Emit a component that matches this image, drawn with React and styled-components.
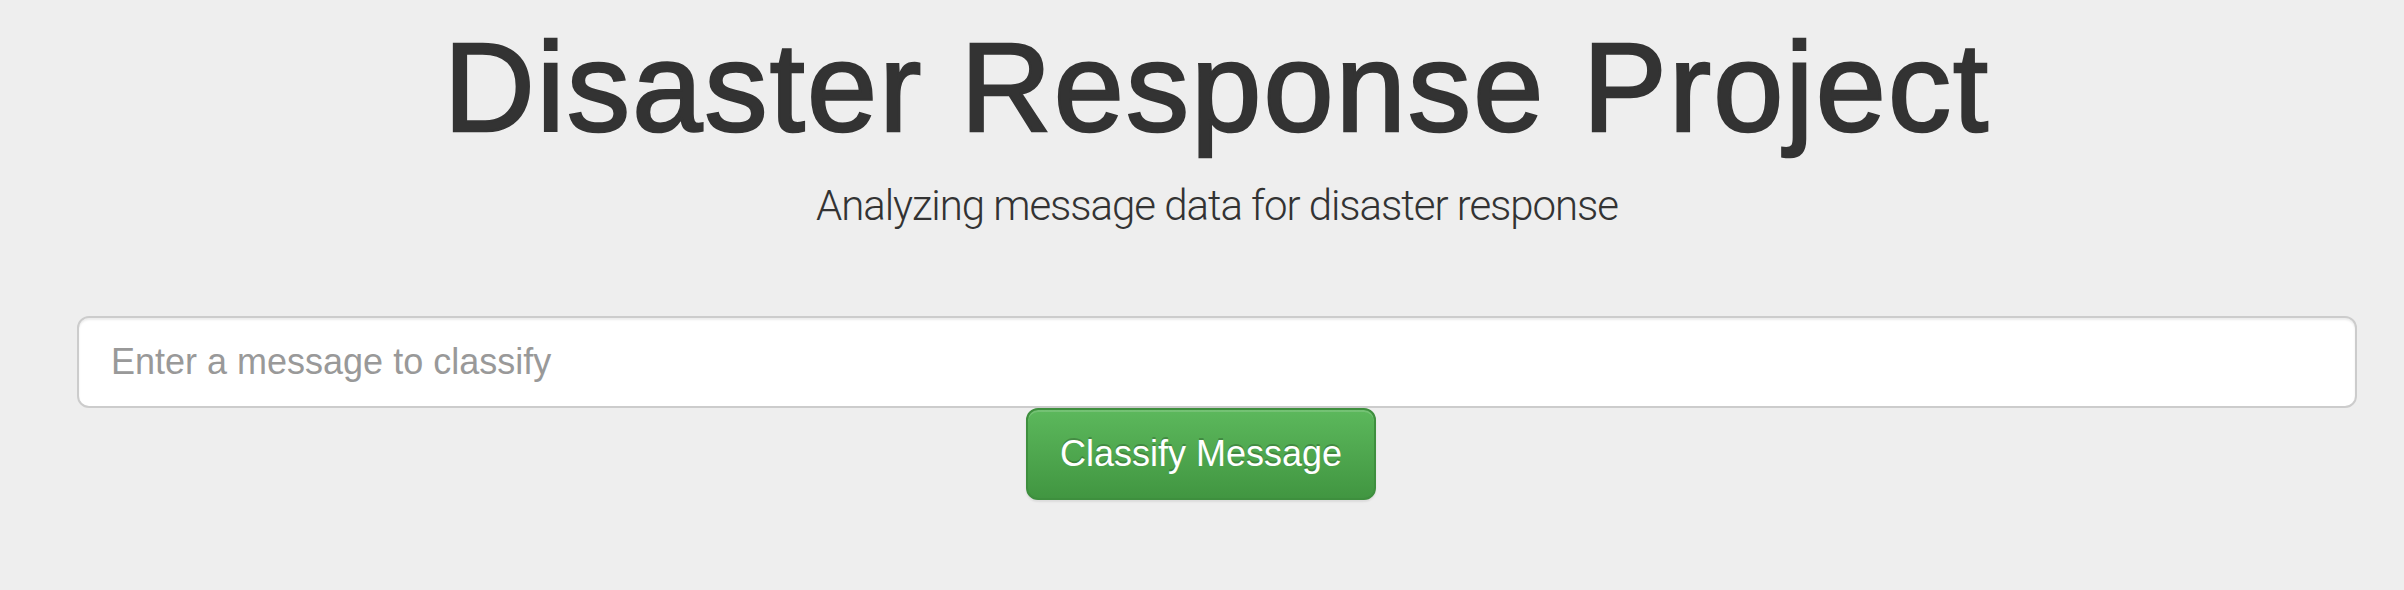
import React from 'react'
import styled, { createGlobalStyle } from 'styled-components'

const GlobalStyle = createGlobalStyle`
  html, body {
    margin: 0;
    padding: 0;
    background-color: #eeeeee;
  }
  body {
    font-family: "Liberation Sans", Arial, sans-serif;
    color: #333333;
  }
  * {
    box-sizing: border-box;
  }
`

function App() {
  return (
    <Page>
      <GlobalStyle />
      <Jumbotron>
        <Title>Disaster Response Project</Title>
        <Lead>Analyzing message data for disaster response</Lead>
        <Form onSubmit={e => e.preventDefault()}>
          <MessageInput type="text" placeholder="Enter a message to classify" />
          <ButtonRow>
            <ClassifyButton type="submit">Classify Message</ClassifyButton>
          </ButtonRow>
        </Form>
      </Jumbotron>
    </Page>
  )
}

export default App

const Page = styled.div`
  min-height: 590px;
  background-color: #eeeeee;
`

const Jumbotron = styled.div`
  width: 2340px;
  margin-left: 47px;
  padding: 19px 30px 60px;
  display: flex;
  flex-direction: column;
  align-items: stretch;
`

const Title = styled.h1`
  margin: 0;
  font-family: "Liberation Sans", Arial, sans-serif;
  font-weight: 400;
  font-size: 126px;
  line-height: 1.1;
  letter-spacing: 2.2px;
  -webkit-text-stroke: 2.5px #333333;
  text-align: center;
  color: #333333;
`

const Lead = styled.p`
  margin: 18px 0 0;
  font-family: Roboto, "Liberation Sans", sans-serif;
  font-weight: 300;
  font-size: 42px;
  line-height: 60px;
  letter-spacing: -1.05px;
  text-align: center;
  color: #333333;
`

const Form = styled.form`
  margin-top: 80px;
  display: flex;
  flex-direction: column;
`

const MessageInput = styled.input`
  width: 100%;
  height: 92px;
  padding: 20px 32px;
  font-family: "Liberation Sans", Arial, sans-serif;
  font-size: 36px;
  line-height: 48px;
  color: #555555;
  background-color: #ffffff;
  border: 2px solid #cccccc;
  border-radius: 12px;
  box-shadow: inset 0 2px 2px rgba(0, 0, 0, 0.075);
  outline: none;

  &::placeholder {
    color: #999999;
  }
`

const ButtonRow = styled.div`
  display: flex;
  justify-content: center;
  padding-right: 32px;
`

const ClassifyButton = styled.button`
  height: 92px;
  padding: 20px 32px;
  font-family: "Liberation Sans", Arial, sans-serif;
  font-size: 36px;
  line-height: 48px;
  color: #ffffff;
  text-shadow: 0 -2px 0 rgba(0, 0, 0, 0.2);
  background-image: linear-gradient(to bottom, #5cb85c 0%, #419641 100%);
  border: 2px solid #3e8f3e;
  border-radius: 12px;
  box-shadow: inset 0 2px 0 rgba(255, 255, 255, 0.15), 0 2px 2px rgba(0, 0, 0, 0.075);
  cursor: pointer;
`
